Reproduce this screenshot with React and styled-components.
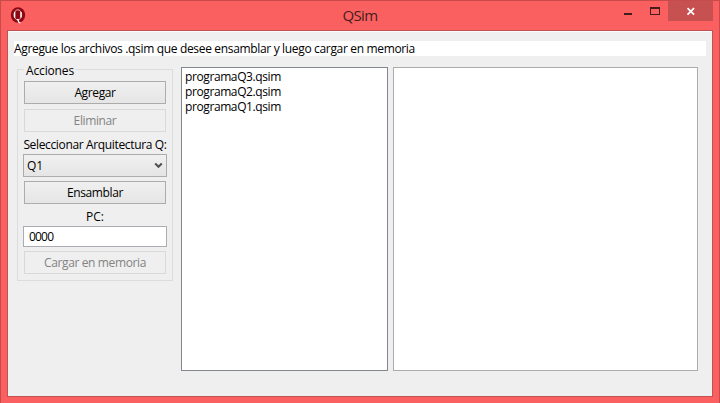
import React from "react";
import styled, { createGlobalStyle } from "styled-components";

const GlobalStyle = createGlobalStyle`
  * { box-sizing: border-box; }
  body { margin: 0; overflow: hidden; }
`;

const Window = styled.div`
  width: 720px;
  height: 403px;
  display: flex;
  flex-direction: column;
  background: #fb6060;
  border: 1px solid #c84b4b;
  border-bottom: 0;
  padding: 0 6px 6px;
  font: 12px/15px "Open Sans", "Noto Sans", sans-serif;
  color: #000;
`;

const TitleBar = styled.header`
  height: 29px;
  flex: none;
  display: grid;
  grid-template-columns: 105px 1fr 105px;
  color: #451d1d;
`;

const AppIcon = styled.svg`
  display: block;
  margin: 6px 0 0 3px;
`;

const Title = styled.h1`
  margin: 3px 0 0;
  text-align: center;
  font-size: 15px;
  line-height: 22px;
  font-weight: 400;
  letter-spacing: -0.6px;
`;

const WindowControls = styled.div`
  display: flex;
  justify-content: flex-end;
`;

const ControlButton = styled.button`
  width: ${(p) => (p.$close ? 45 : 27)}px;
  height: 20px;
  padding: 0;
  border: 0;
  background: ${(p) => (p.$close ? "#c75050" : "transparent")};
  svg { display: block; }
`;

const Client = styled.main`
  flex: 1;
  min-height: 0;
  background: #efefef;
  border: 1px solid #c05252;
  box-shadow: inset 0 1px #fafafa;
  padding: 10px 6px 0;
`;

const Instruction = styled.div`
  height: 15px;
  background: #fff;
  white-space: nowrap;
  letter-spacing: -0.335px;
`;

const Columns = styled.div`
  display: flex;
  align-items: flex-start;
  padding: 11px 0 0 3px;
`;

const ActionGroup = styled.fieldset`
  width: 156px;
  height: 219px;
  margin: -5px 8px 0 0;
  padding: 4px 5px 0;
  border: 1px solid #dcdcdc;
  display: flex;
  flex-direction: column;
  min-width: 0;
`;

const Legend = styled.legend`
  height: 15px;
  line-height: 17px;
  margin-left: 1px;
  padding: 0 2px;
  letter-spacing: -0.15px;
`;

const ActionButton = styled.button`
  height: 23px;
  flex: none;
  margin: 0 1px ${(p) => p.$gap}px;
  padding: 0 0 1px;
  border: 1px solid ${(p) => (p.disabled ? "#d9d9d9" : "#acacac")};
  background: ${(p) => (p.disabled ? "#efefef" : "linear-gradient(#f0f0f0, #e5e5e5)")};
  color: ${(p) => (p.disabled ? "#838383" : "#000")};
  font: inherit;
  letter-spacing: -0.38px;
`;

const FieldLabel = styled.label`
  height: 15px;
  flex: none;
  margin-bottom: 2px;
  text-align: center;
  white-space: nowrap;
  letter-spacing: ${(p) => p.$spacing || 0}px;
`;

const Combo = styled.div`
  height: 23px;
  flex: none;
  display: flex;
  align-items: center;
  justify-content: space-between;
  margin-bottom: 4px;
  padding: 0 3px;
  border: 1px solid #acacac;
  background: linear-gradient(#f0f0f0, #e5e5e5);
`;

const TextInput = styled.input`
  width: 100%;
  height: 21px;
  flex: none;
  margin: 0 0 4px;
  padding: 0 5px;
  border: 1px solid #abadb3;
  background: #fff;
  color: #000;
  font: inherit;
  letter-spacing: -0.8px;
  outline: 0;
`;

const FileList = styled.ul`
  width: 207px;
  height: 304px;
  margin: 0 5px 0 0;
  padding: 1px 3px;
  border: 1px solid #828790;
  background: #fff;
  list-style: none;
  letter-spacing: -0.4px;
`;

const FileItem = styled.li`
  height: 15px;
`;

const OutputPane = styled.div`
  width: 305px;
  height: 304px;
  border: 1px solid #acacac;
  background: #fff;
`;

const files = ["programaQ3.qsim", "programaQ2.qsim", "programaQ1.qsim"];

export default function App() {
  return (
    <>
      <GlobalStyle />
      <Window>
        <TitleBar>
          <AppIcon width="16" height="18" viewBox="0 0 16 18">
            <ellipse cx="8" cy="8" rx="7.2" ry="7.8" fill="#8b0914" />
            <ellipse cx="7.8" cy="7.8" rx="3.8" ry="5" fill="none" stroke="#f3b9b9" strokeWidth="1" />
            <path d="M4.7 5v5.5M10.9 5v5.5" stroke="#fff" strokeWidth="1.3" />
            <path d="M7 12.5q1.3 0 1.5 1.8t2 1.3" fill="none" stroke="#fff" strokeWidth="1.3" />
          </AppIcon>
          <Title>QSim</Title>
          <WindowControls>
            <ControlButton aria-label="Minimizar">
              <svg width="27" height="20"><path d="M10 12h8v2h-8z" fill="#451d1d" /></svg>
            </ControlButton>
            <ControlButton aria-label="Maximizar">
              <svg width="27" height="20"><path d="M9 6h10v8H9zM10 8v5h8V8z" fillRule="evenodd" fill="#451d1d" /></svg>
            </ControlButton>
            <ControlButton $close aria-label="Cerrar">
              <svg width="45" height="20"><path d="M19.5 7.2l6.6 6.4M26.1 7.2l-6.6 6.4" stroke="#fff" strokeWidth="1.7" /></svg>
            </ControlButton>
          </WindowControls>
        </TitleBar>
        <Client>
          <Instruction>
            Agregue los archivos .qsim que desee ensamblar y luego cargar en memoria
          </Instruction>
          <Columns>
            <ActionGroup>
              <Legend>Acciones</Legend>
              <ActionButton $gap={5}>Agregar</ActionButton>
              <ActionButton $gap={5} disabled>Eliminar</ActionButton>
              <FieldLabel $spacing={-0.35}>Seleccionar Arquitectura Q:</FieldLabel>
              <Combo>
                Q1
                <svg width="9" height="7"><path d="M1.2 1.5l3.3 3.3 3.3-3.3" fill="none" stroke="#505050" strokeWidth="2" /></svg>
              </Combo>
              <ActionButton $gap={5}>Ensamblar</ActionButton>
              <FieldLabel>PC:</FieldLabel>
              <TextInput defaultValue="0000" aria-label="PC" />
              <ActionButton $gap={0} disabled>Cargar en memoria</ActionButton>
            </ActionGroup>
            <FileList>
              {files.map((name) => <FileItem key={name}>{name}</FileItem>)}
            </FileList>
            <OutputPane />
          </Columns>
        </Client>
      </Window>
    </>
  );
}
